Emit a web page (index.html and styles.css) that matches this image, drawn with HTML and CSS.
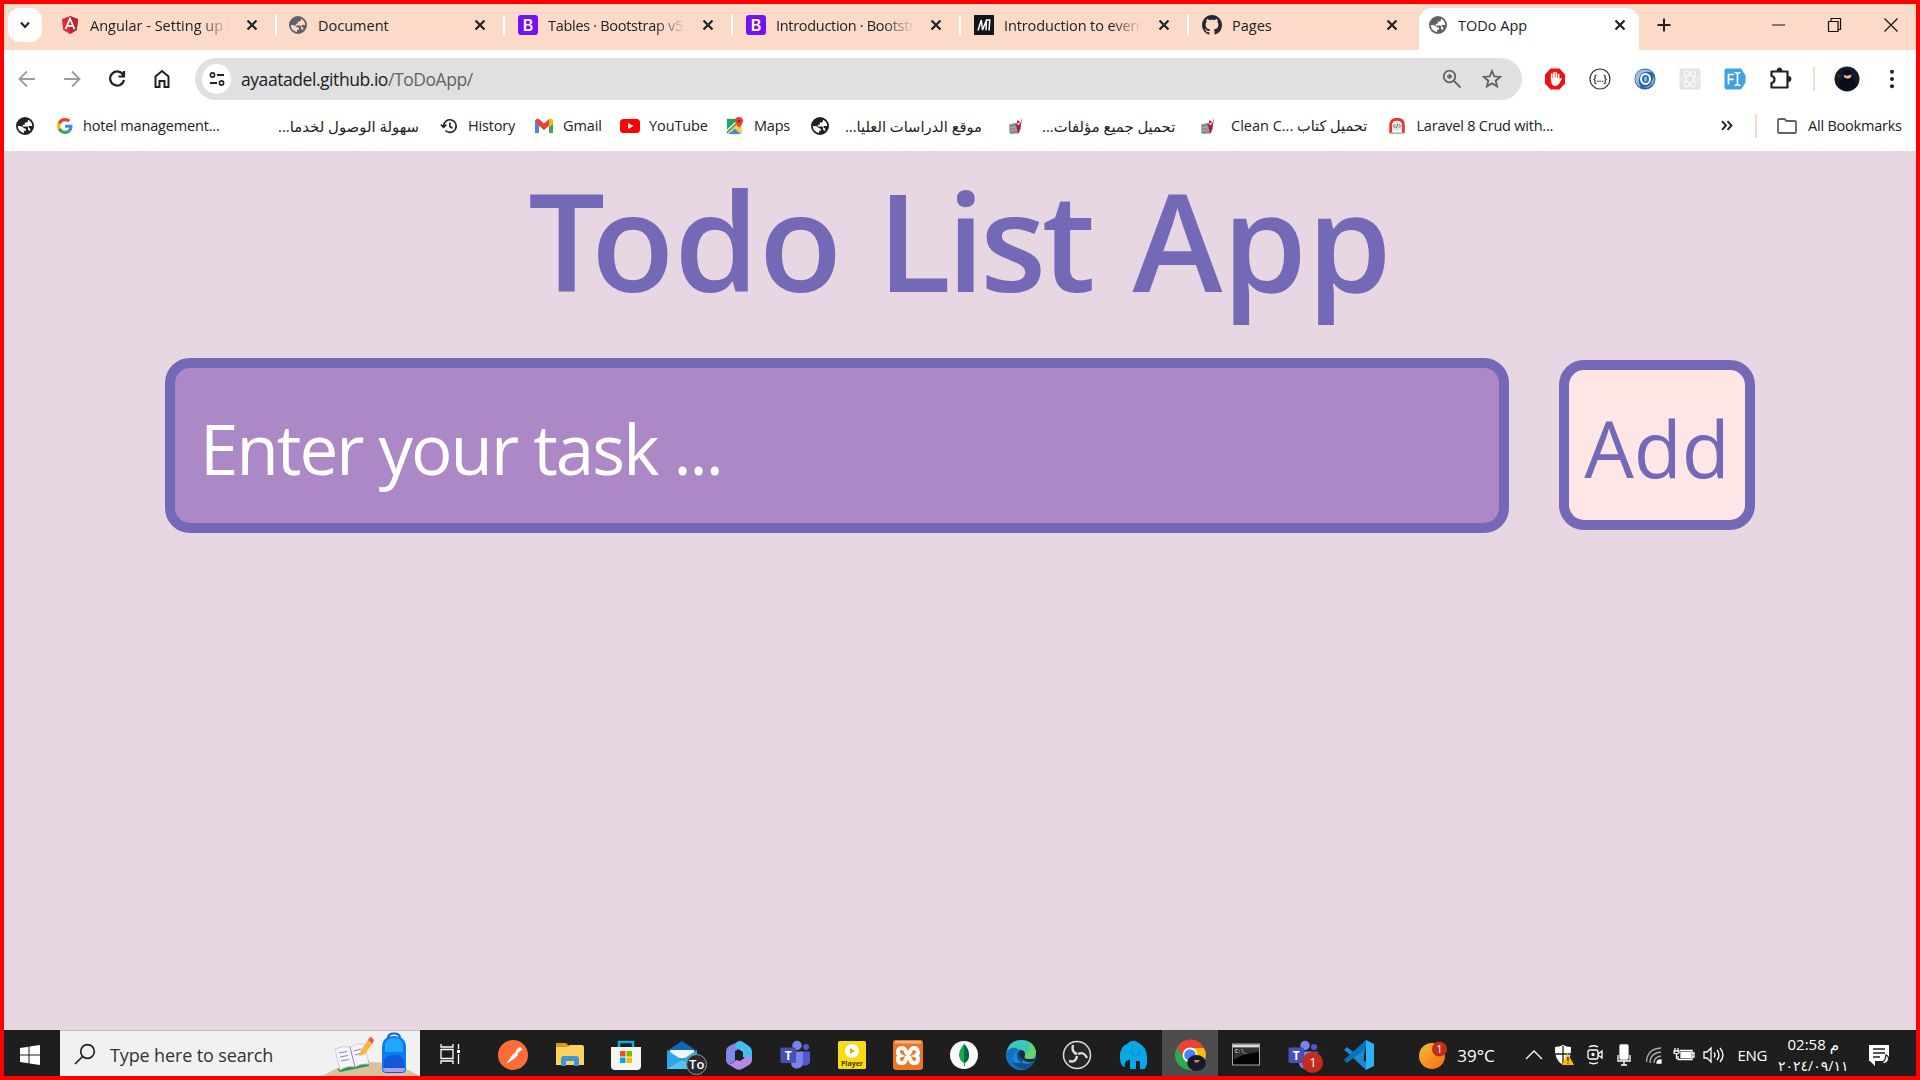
FILE: index.html
```html
<!DOCTYPE html>
<html lang="en">
<head>
<meta charset="utf-8">
<title>TODo App</title>
<link rel="stylesheet" href="styles.css">
</head>
<body>
<svg class="defs" aria-hidden="true">
  <symbol id="close" viewBox="0 0 12 12"><path d="M1.500 1.500l9 9M10.500 1.500l-9 9" stroke="#222" stroke-width="2.200" fill="none"/></symbol>
  <symbol id="globe" viewBox="2 2 20 20"><path fill="currentColor" d="M12 2a10 10 0 1 0 0 20a10 10 0 0 0 0-20zM4 12.200c2-.4 4 0 5.500 1c.8 1.400 2.500 1.800 3.500 2v2h-2v2.700A8 8 0 0 1 4 12.200zM17.600 17.700c-.8-1-2-1-2.200-1.500v-2.700l-1-1H9.500v-2h2.300V8.200h2.400l1-1V5l1.300.500a8 8 0 0 1 3.500 6.500h-3.500l-1 1l2.400 2z"/></symbol>
  <symbol id="book" viewBox="0 0 18 20"><path d="M2 8l8-1.500l2 2V18l-8 1q-2 0-2.500-2V9z" fill="#8d8b8b"/><path d="M2 12l9-1M2 15l9-1" stroke="#b9b7b7" stroke-width=".8"/><path d="M15.500 1c0 3-.5 5-1 7q0 8-4 11c1-3 0-5-1-8l-1.500-3.500l4 2q2.500-3 3.500-8.500z" fill="#a8203c"/><circle cx="11.500" cy="5.500" r="1.500" fill="#a8203c"/></symbol>
  <symbol id="teams" viewBox="0 0 32 32"><circle cx="18" cy="6.500" r="4.700" fill="#7b83eb"/><circle cx="27" cy="8" r="3" fill="#5059c9"/><path d="M22 12.500h9v9q0 5-5 5h-4z" fill="#5059c9"/><path d="M12 12.500h12v10q0 7-6 7t-6-6z" fill="#7b83eb"/><rect x="1.500" y="8.500" width="15.500" height="15.500" rx="1.500" fill="#4650b5"/></symbol>
</svg>
<div class="screen">
  <header class="tabs">
    <button class="tab-search"><svg width="12" height="12" viewBox="0 0 12 12"><path d="M2 3.500l4 4.500l4-4.500" fill="none" stroke="#222" stroke-width="2"/></svg></button>
    <div class="tab"><svg class="fav" viewBox="0 0 20 20"><path d="M10 0l9 3.500l-1.500 12L10 20l-7.500-4.500L1 3.500z" fill="#dd2d35"/><path d="M10 0l9 3.500l-1.500 12L10 20z" fill="#b9242e"/><path d="M5 14.500L10 3l5 11.500M7 11h6" stroke="#fff" stroke-width="1.900" fill="none"/></svg><span class="tab-title fade">Angular - Setting up t</span><svg class="x"><use href="#close"/></svg></div>
    <div class="tab"><svg class="fav gray"><use href="#globe"/></svg><span class="tab-title">Document</span><svg class="x"><use href="#close"/></svg></div>
    <div class="tab"><svg class="fav big" viewBox="0 0 20 20"><rect width="20" height="20" rx="3" fill="#7411f5"/><text x="10" y="16" text-anchor="middle" class="bs-letter">B</text></svg><span class="tab-title fade snug">Tables · Bootstrap v5.0</span><svg class="x"><use href="#close"/></svg></div>
    <div class="tab"><svg class="fav big" viewBox="0 0 20 20"><rect width="20" height="20" rx="3" fill="#7411f5"/><text x="10" y="16" text-anchor="middle" class="bs-letter">B</text></svg><span class="tab-title fade snug">Introduction · Bootstrap</span><svg class="x"><use href="#close"/></svg></div>
    <div class="tab"><svg class="fav big" viewBox="0 0 20 20"><path d="M0 0h20v20H0z" fill="#15141a"/><path d="M4 15.500L7.300 5L8.500 15L12.500 5L12 15.300M15 15.500L15.800 5H12" stroke="#fff" stroke-width="1.500" fill="none"/></svg><span class="tab-title fade snug-s">Introduction to events</span><svg class="x"><use href="#close"/></svg></div>
    <div class="tab"><svg class="fav big" viewBox="0 0 16 16"><path fill="#24292f" d="M8 0C3.580 0 0 3.580 0 8c0 3.540 2.290 6.530 5.470 7.590.4.070.55-.17.55-.38 0-.19-.01-.82-.01-1.490-2.010.37-2.530-.49-2.690-.94-.09-.23-.48-.94-.82-1.130-.28-.15-.68-.52-.01-.53.63-.01 1.080.58 1.230.82.72 1.210 1.870.87 2.330.66.07-.52.28-.87.51-1.070-1.780-.2-3.640-.89-3.640-3.950 0-.87.310-1.590.82-2.150-.08-.2-.36-1.020.08-2.120 0 0 .67-.210 2.200.82.64-.18 1.320-.27 2-.27s1.360.09 2 .27c1.530-1.040 2.200-.82 2.200-.82.44 1.100.16 1.920.08 2.120.51.56.82 1.270.82 2.150 0 3.070-1.870 3.750-3.650 3.950.29.25.54.73.54 1.480 0 1.070-.01 1.930-.01 2.200 0 .21.15.46.55.38A8.010 8.010 0 0 0 16 8c0-4.420-3.580-8-8-8z"/></svg><span class="tab-title">Pages</span><svg class="x"><use href="#close"/></svg></div>
    <div class="tab active"><svg class="fav gray"><use href="#globe"/></svg><span class="tab-title">TODo App</span><svg class="x"><use href="#close"/></svg></div>
    <svg class="plus" viewBox="0 0 14 14"><path d="M7 .5v13M.5 7h13" stroke="#222" stroke-width="2"/></svg>
    <svg class="win" viewBox="0 0 128 16"><path d="M1 8h13M113.500 1.500l13 13M126.500 1.500l-13 13M57.500 4.500h9.500v10h-9.500zM60 4v-2.500h9.500v11H67" fill="none" stroke="#111" stroke-width="1.200"/></svg>
  </header>
  <nav class="toolbar">
    <svg class="tool" viewBox="0 0 24 24"><path d="M20 12H5M12 4.500L4.500 12L12 19.500" class="nav-dim"/></svg>
    <svg class="tool" viewBox="0 0 24 24"><path d="M4 12h15M12 4.500l7.500 7.500l-7.500 7.500" class="nav-dim"/></svg>
    <svg class="tool" viewBox="0 0 24 24"><path d="M18.500 8.500A7 7 0 1 0 19 13M19 4V9.500H13.500" fill="none" stroke="#222" stroke-width="2.200"/></svg>
    <svg class="tool" viewBox="0 0 24 24"><path d="M5.500 20V9.500L12 4l6.500 5.500V20h-4v-6h-5v6z" fill="none" stroke="#222" stroke-width="2"/></svg>
    <div class="omnibox">
      <span class="tune"><svg width="18" height="18" viewBox="0 0 18 18"><path d="M9 5h7M2 13h7" stroke="#222" stroke-width="1.800"/><circle cx="4.500" cy="5" r="2.100"/><circle cx="13.500" cy="13" r="2.100"/></svg></span>
      <span class="url">ayaatadel.github.io<span class="path">/ToDoApp/</span></span>
      <svg class="omni-icon" viewBox="0 0 22 22"><circle cx="8.500" cy="8.500" r="5.800"/><path d="M13 13l6.500 6.500M8.500 6v5M6 8.500h5"/></svg>
      <svg class="omni-icon" viewBox="0 0 22 22"><path d="M11 3l2.300 5.400l5.900.5l-4.500 3.800l1.400 5.700L11 15.400l-5.100 3l1.400-5.700L2.800 8.900l5.900-.5z"/></svg>
    </div>
    <div class="ext">
      <svg viewBox="0 0 24 24"><path d="M7.500 1.500h9L22 7.500v9l-5.500 6h-9L2 16.500v-9z" fill="#ed1111"/><path d="M8.700 13V7M11 12V5.500M13.300 12V5.500M15.600 13V7.500" stroke="#fff" stroke-width="1.700" stroke-linecap="round"/><path d="M7.900 11h8.500v2l1.200-1.800q1.400-.4 1.200.6L16 17q-1.500 2-4 2t-3.500-3z" fill="#fff"/></svg>
      <svg viewBox="0 0 24 24"><circle cx="12" cy="12" r="10" fill="#fff" stroke="#333" stroke-width="1.200"/><text x="12" y="15" text-anchor="middle" class="braces">{...}</text></svg>
      <svg viewBox="0 0 24 24"><circle cx="12" cy="12" r="10.500" fill="#2762ae"/><path d="M2.500 14Q1 4 11 2.500q6 0 8 3Q10 3 7 9q-3 6 1 11q-4-1-5.500-6z" fill="#9cc0e4"/><path d="M21 9q2 8-5 11q-3 1-6 0q8 0 9-6q1-3 2-5z" fill="#7faedb"/><ellipse cx="12.500" cy="12" rx="4.500" ry="5" fill="#2d6cb8" stroke="#fff" stroke-width="2"/><ellipse cx="12.500" cy="12" rx="1.300" ry="2.500" fill="#a9cbea"/></svg>
      <svg viewBox="0 0 24 24"><rect x="1.500" y="1.500" width="21" height="21" rx="1.500" fill="#e4e4e4"/><g fill="none" stroke="#fafafa"><ellipse cx="12" cy="12" rx="9" ry="3.500"/><ellipse cx="12" cy="12" rx="9" ry="3.500" transform="rotate(60 12 12)"/><ellipse cx="12" cy="12" rx="9" ry="3.500" transform="rotate(120 12 12)"/></g></svg>
      <svg viewBox="0 0 24 24"><path d="M3.500 1.500H18l4.500 7v7l-4.500 7H3.500q-2 0-2-2v-17q0-2 2-2z" fill="#42a1e1"/><path d="M5.500 17.500V7.500h5.500M5.500 12.300h5M11.500 5.500q2.500 0 3 1.500q.5-1.500 3-1.500M14.500 7v10M11.500 18.500q2.500 0 3-1.500q.5 1.500 3 1.500" fill="none" stroke="#fff" stroke-width="1.700"/></svg>
      <svg viewBox="0 0 24 24"><path d="M3.500 4.500h16v16h-16v-4.500q3-.5 3-3.500t-3-3.500z" fill="none" stroke="#222" stroke-width="2.200" stroke-linejoin="round"/><path d="M9 3.500a2.500 2.500 0 0 1 5 0zM20.500 9.500a2.500 2.500 0 0 1 0 5z" fill="#222" stroke="#222"/></svg>
    </div>
    <i class="divider"></i>
    <svg class="avatar" viewBox="0 0 26 26"><circle cx="13" cy="13" r="12.500" fill="#131b2b"/><path d="M5 20q1-6 4-8q-1-8 4-8.500q6 1 5 9q4 3 4 8q-8 8-17-.5z" fill="#0a0e19"/><circle cx="4.500" cy="10" r="1.800" fill="#3a2a22"/><path d="M9.500 9l3.500.8l4.500-1.200l-.5 3l-3 1.200l-3.500-1z" fill="#e0b7a2"/></svg>
    <svg class="dots" viewBox="0 0 6 24"><circle cx="3" cy="4" r="2.200"/><circle cx="3" cy="12" r="2.200"/><circle cx="3" cy="20" r="2.200"/></svg>
  </nav>
  <nav class="bookmarks">
    <span><svg class="bi"><use href="#globe"/></svg></span>
    <span><svg class="bi g" viewBox="0 0 48 48"><path fill="#4285f4" d="M46.500 24.500c0-1.600-.2-3.100-.4-4.500H24v9h12.700c-.6 3-2.300 5.400-4.700 7l7.500 6c4.500-4 7-10 7-17.500z"/><path fill="#34a853" d="M24 48c6.500 0 12-2 15.900-5.800l-7.700-6c-2.200 1.500-5 2.300-8.200 2.300-6.300 0-11.600-4.200-13.500-9.900l-8 6.200C6.500 42.600 14.600 48 24 48z"/><path fill="#fbbc05" d="M10.500 28.600a14 14 0 0 1 0-9.200l-8-6.200a24 24 0 0 0 0 21.600z"/><path fill="#ea4335" d="M24 9.500c3.500 0 6.700 1.200 9.200 3.600l6.900-6.900A24 24 0 0 0 2.500 13.200l8 6.200c1.900-5.700 7.200-9.900 13.500-9.900z"/></svg><b class="hotel">hotel management...</b></span>
    <span><b class="access" dir="rtl">سهولة الوصول لخدما...</b></span>
    <span><svg class="bi" viewBox="0 0 20 20"><path d="M4 10a7 7 0 1 1 2 5M1 8.500l3 3l3-3M11 6v4.500l3 2" fill="none" stroke="#222" stroke-width="1.800"/></svg><b class="nudge-2">History</b></span>
    <span><svg class="bi wide" viewBox="0 0 20 16"><path d="M1 2v13h4V6z" fill="#4285f4"/><path d="M19 2v13h-4V6z" fill="#34a853"/><path d="M1 2.500Q3-.5 5.500 1.500L10 5.500l4.500-4Q17-.5 19 2.500L15 8l-5 4l-5-4z" fill="#ea4335"/><path d="M15 1.500Q18-.5 19 3v3l-4 3z" fill="#fbbc04"/></svg><b class="nudge-1">Gmail</b></span>
    <span><svg class="bi wide" viewBox="0 0 20 16"><rect y="1" width="20" height="14" rx="3.500" fill="#f00"/><path d="M8 5l5.500 3L8 11z" fill="#fff"/></svg><b class="nudge-1">YouTube</b></span>
    <span><svg class="bi" viewBox="0 0 20 20"><rect x="1" y="2" width="16" height="17" fill="#20a464"/><path d="M1 18L14 6l3 3v10H1z" fill="#f5cf42"/><path d="M3 19l7-6l6 6z" fill="#4285f4"/><path d="M1 15L13 4" stroke="#fff" stroke-width="1.500"/><path d="M14.500 12Q10 7 10 4.500a4.500 4.500 0 0 1 9 0Q19 7 14.500 12z" fill="#e74335"/><circle cx="14.500" cy="4.500" r="1.500" fill="#8d1c15"/></svg><b class="nudge-2">Maps</b></span>
    <span><svg class="bi"><use href="#globe"/></svg><b class="studies" dir="rtl">موقع الدراسات العليا...</b></span>
    <span><svg class="bi"><use href="#book"/></svg><b class="works" dir="rtl">تحميل جميع مؤلفات...</b></span>
    <span><svg class="bi"><use href="#book"/></svg><b class="clean">Clean C... تحميل كتاب</b></span>
    <span><svg class="bi" viewBox="0 0 20 20"><path d="M3 18V9q0-6.500 7-6.500T17 9v9" fill="none" stroke="#e3342f" stroke-width="3.200"/><path d="M3 17h14v2H3z" fill="#b9b9b9"/><circle cx="10" cy="10" r="5.500" fill="#e6e6e6"/><path d="M8 8l-2 2l2 2M12 8l2 2l-2 2M11 7.500l-2 5" fill="none" stroke="#555"/></svg><b class="laravel">Laravel 8 Crud with...</b></span>
    <span><svg class="more" viewBox="0 0 12 10"><path d="M1 .7L5 5L1 9.300M6.500 .7l4 4.300l-4 4.300" fill="none" stroke="#222" stroke-width="1.900"/></svg></span>
    <i class="divider"></i>
    <span><svg class="folder" viewBox="0 0 20 16"><path d="M1 2q0-1 1-1h5.500l2 2H18q1 0 1 1v10q0 1-1 1H2q-1 0-1-1z" fill="none" stroke="#5f6368" stroke-width="1.800"/></svg><b class="all">All Bookmarks</b></span>
  </nav>
  <main class="app">
    <h1><span class="kern">T</span>odo <span class="list">List</span> App</h1>
    <div class="entry">
      <div class="task"><span>Enter your task ...</span></div>
      <button class="add"><span>Add</span></button>
    </div>
  </main>
  <footer class="taskbar">
    <div class="start"><svg width="20" height="20" viewBox="0 0 20 20"><path d="M0 3l8.500-1.300v7.800H0zM9.500 1.500L20 0v9.500H9.500zM0 10.500h8.500v7.800L0 17zM9.500 10.500H20V20L9.500 18.500z" fill="#fff"/></svg></div>
    <div class="search">
      <svg class="lens" width="22" height="22" viewBox="0 0 22 22"><circle cx="13.500" cy="8.500" r="6.800"/><path d="M8.500 13.500L1 21"/></svg>
      <span class="search-text">Type here to search</span>
      <svg class="art" viewBox="0 0 97 45"><path d="M0 45Q22 30 49 31t48 14z" fill="#dcc09b"/><path d="M14 38l3 3l29-6v-6z" fill="#27994c"/><path d="M12 18q8-4 15-2q6-4 14-3l5 20q-8-1-14 3q-7-2-15 3z" fill="#f5f4fa" stroke="#c7c3dc" stroke-width=".8"/><path d="M27 16l5 20M16 22l8-1.500M17 26l8-1.500M18 30l8-1.500M31 20l7-2M32 24l7-2" stroke="#8b86b0" stroke-width="1" fill="none"/><path d="M36 25l2-6L45 9l4 4l-7 10z" fill="#fbb53a"/><path d="M45 9l2-3q3 0 4 4l-2 3z" fill="#e85b4e"/><path d="M65 7q0-4.500 6-4.500t6 4.500" fill="none" stroke="#1360c8" stroke-width="2"/><path d="M59 38V17Q59 5 71 5t12 12v21q0 4-4 4H63q-4 0-4-4z" fill="#087dee"/><path d="M62 15Q62 7 71 7t9 8v6H62z" fill="#22a5ff"/><path d="M61 39V31q0-7 10-7t10 7v8q-1 3-5 3H66q-5 0-5-3z" fill="#1159d8"/><path d="M60 37h22q0 4-3 4H63q-3 0-3-4z" fill="#a7a2f5"/></svg>
    </div>
    <div class="view"><svg width="22" height="22" viewBox="0 0 22 22"><path d="M2 1v3h12V1M2 6.500h12v9H2zM2 21v-3h12v3M19.500 1v5M19.500 11v10" fill="none" stroke="#fff" stroke-width="1.300"/><path d="M18 7h3v3h-3z" fill="#fff"/></svg></div>
    <div class="apps">
      <div><svg viewBox="0 0 32 32"><circle cx="16" cy="16" r="15" fill="#ff6c37"/><path d="M9 25l7-10l4-1l1 2l-4 4z" fill="#fff"/><path d="M18 14l2-4q3-3 4.500-1T23 12l-3 3z" fill="#fff"/></svg></div>
      <div><svg viewBox="0 0 32 32"><path d="M2 4h10l3 3v5H2z" fill="#d99b10"/><path d="M2 8h11l3-2h12q2 0 2 2v18H2z" fill="#ffd35b"/><path d="M7 27V20q0-3 3-3h12q3 0 3 3v7h-5v-5h-8v5z" fill="#3e94d9"/></svg></div>
      <div><svg viewBox="0 0 32 32"><path d="M9 8V3h14v5" fill="none" stroke="#18a8df" stroke-width="2.500"/><path d="M1 8h30v19q0 4-4 4H5q-4 0-4-4z" fill="#f5f5f5"/><path d="M10 12h5.500v5.500H10z" fill="#f25022"/><path d="M16.500 12H22v5.500h-5.500z" fill="#7fba00"/><path d="M10 18.500h5.500V24H10z" fill="#00a4ef"/><path d="M16.500 18.500H22V24h-5.500z" fill="#ffb900"/></svg></div>
      <div><svg viewBox="0 0 32 32"><path d="M1 12L16 2l15 10v18H1z" fill="#1168b8"/><path d="M4 11h24v8H4z" fill="#f4f4f4"/><path d="M1 11l15 10l15-10v19H1z" fill="#28a8ea"/><path d="M4 11h24L16 20z" fill="#f4f4f4"/><path d="M1 30l15-9l15 9z" fill="#50c5f5"/></svg><em class="badge dark">To</em></div>
      <div><svg viewBox="0 0 32 32"><path d="M17 2L6 7q-3 2-3 5v9q0 3 3 4.500l6-3.500V12l8-4z" fill="#7f86e8"/><path d="M14 3q3-2 6 0l6 4q3 2 3 5v10l-9-4v-5l-8-5z" fill="#41bdf0"/><path d="M29 18v3q0 3-3 5l-7 4q-3 1.500-6 0l-8-5q5 0 8-4l4 1l6-4z" fill="#b58ae8"/><path d="M16 11l4 2.500v5L16 21l-4-2.500v-5z" fill="#1e1e1e"/></svg></div>
      <div><svg viewBox="0 0 32 32"><use href="#teams"/><text x="9.300" y="20.500" text-anchor="middle" class="teams-letter">T</text></svg></div>
      <div><svg viewBox="0 0 32 32"><rect x="2" y="2" width="28" height="28" rx="1.500" fill="#f8da16"/><circle cx="16" cy="12" r="7" fill="#fff"/><path d="M14 9l5 3l-5 3z" fill="#dfad00"/><text x="16" y="27" text-anchor="middle" class="player-label">Player</text></svg></div>
      <div><svg viewBox="0 0 32 32"><rect x="1" y="1" width="30" height="30" rx="3" fill="#ee7426"/><path d="M3 2h26v2.500H3z" fill="#f9b483"/><path d="M10 9q3 0 4 4q1 2 2 2t2-2q1-4 4-4t4 4q0 2.500-2 3.500q2 .5 2 4q0 3.500-4 3.500q-3 0-4-4q-1-2-2-2t-2 2q-1 4-4 4q-4 0-4-3.500t2-4q-2-1-2-3.500q0-4 4-4z" fill="none" stroke="#fff" stroke-width="4"/></svg></div>
      <div><svg viewBox="0 0 32 32"><circle cx="16" cy="16" r="14" fill="#fafafa"/><path d="M16 5q5 5 5 11t-4 8v3h-1v-3q-5-3-5-8t5-11z" fill="#13aa52"/><path d="M16 5q5 5 5 11t-5 8z" fill="#00684a"/></svg></div>
      <div><svg viewBox="0 0 32 32"><circle cx="16" cy="16" r="15" fill="#1589d3"/><path d="M2 12Q5 1 16 1q13 0 15 12q0 7-8 7q-5 0-3-4q-1-6-8-6q-6 0-10 4z" fill="#3cc6b8"/><path d="M24 3.500q7 4 7 10.500t-8 6q-5 0-3-4q6-3 4-12.500z" fill="#68d463"/><path d="M12 12q-6 5-3 12q4 6 13 6q-8 3-15-2Q0 22 1 14q3-6 11-5z" fill="#1172c4"/><path d="M20 16q0-5-5-5q-4 2-3 7q2 7 10 7q4 0 7-3q-2 6-9 8q-9 0-13-7q12 3 11-3z" fill="#124f93"/><path d="M16 11q4 1 4 5q-2 4 3 4h8l-1 2q-8 3-13-2t-1-9z" fill="#1e2a38"/></svg></div>
      <div><svg viewBox="0 0 32 32"><circle cx="16" cy="16" r="13.500" fill="#282528" stroke="#ddd" stroke-width="1.500"/><path d="M16 15Q10 13 12 6M17 15q6-3 9 4M16 17q-1 7-8 5" fill="none" stroke="#ddd" stroke-width="2.400"/></svg></div>
      <div><svg viewBox="0 0 32 32"><path d="M3 20Q2 8 10 5q5-6 12-1q8 4 8 15v6l-2 5h-5v-8h-4v8h-6v-9q-4 0-5 3q-1 4 1 4q-5 1-6-8z" fill="#08a8e8"/><path d="M16 6q-4 6 1 11q5 1 6-6" stroke="#0784ba" fill="none"/></svg></div>
      <div class="running"><svg viewBox="0 0 32 32"><circle cx="16" cy="16" r="15" fill="#2da94f"/><path d="M3 9A15 15 0 0 1 30 9H16L10 19z" fill="#ea4335"/><path d="M30 9a15 15 0 0 1-14 22l7-12L18 9z" fill="#fbbc04"/><circle cx="16" cy="16" r="7.500" fill="#fff"/><circle cx="16" cy="16" r="5.800" fill="#4285f4"/><ellipse cx="22.500" cy="24" rx="9.300" ry="8" fill="#171a28"/><path d="M20 21h6l-2 2.500h-3z" fill="#bd8f79"/></svg></div>
      <div><svg viewBox="0 0 32 32"><rect x="2.500" y="5" width="27" height="21" fill="#050505" stroke="#aaa"/><path d="M3 5.500h26v3H3z" fill="#ddd"/><path d="M4 21Q13 14 29 13V9H4z" fill="#333"/><text x="5" y="13.500" class="prompt">C:\_</text></svg></div>
      <div><svg viewBox="0 0 32 32"><use href="#teams"/><text x="9.300" y="20.500" text-anchor="middle" class="teams-letter">T</text></svg><em class="badge red">1</em></div>
      <div><svg viewBox="0 0 32 32"><path d="M23 1L7 16L23 31V23L4 8L1 11l19 15z" fill="#198bd0"/><path d="M1 21l3 3L23 9V1z" fill="#0873bd"/><path d="M23 1l8 4v22l-8 4z" fill="#2bb1f5"/></svg></div>
    </div>
    <div class="tray">
      <span><svg width="36" height="34" viewBox="0 0 36 34"><defs><linearGradient id="sun" x2="1" y2="1"><stop stop-color="#f2bd3a"/><stop offset="1" stop-color="#f96a11"/></linearGradient></defs><circle cx="18" cy="18" r="13" fill="url(#sun)"/><circle cx="25.500" cy="11" r="7.500" fill="#c42b1c"/><text x="25.500" y="15" text-anchor="middle" class="alert">1</text></svg></span>
      <span class="temp">39°C</span>
      <span><svg width="18" height="12" viewBox="0 0 18 12"><path d="M1 10l8-8l8 8"/></svg></span>
      <span><svg width="20" height="22" viewBox="0 0 20 22"><path d="M9 1q4 2 8 2q1 13-8 18Q0 16 1 3q4 0 8-2z" fill="#fff" stroke="none"/><path d="M9 2v19M1 10h16" stroke="#222"/><path d="M13.500 9L20 21H8z" fill="#ffb900" stroke="none"/><path d="M14 13v4M14 18.500v1" stroke="#222"/></svg></span>
      <span><svg width="18" height="22" viewBox="0 0 18 22"><rect x="2" y="6" width="10" height="9" rx="2"/><path d="M12 10l4-3v7l-4-3M3 3q4.500-2.500 9 0M3 18.500q4.500 2.500 9 0"/><circle cx="7" cy="10.500" r="1"/></svg></span>
      <span><svg width="14" height="22" viewBox="0 0 14 22"><rect x="3" y="1" width="8" height="14" rx="1" fill="#fff"/><path d="M1 11v6h12v-6M7 17v4M4 21h6"/></svg></span>
      <span><svg width="18" height="18" viewBox="0 0 18 18"><path d="M1.500 16Q2 3 16 2M5 17Q5 7 16 6M9 17q0-6 7-7" stroke="#aaa"/><path d="M12 17q0-3 4-3v3z" fill="#fff"/></svg></span>
      <span><svg width="22" height="18" viewBox="0 0 22 18"><path d="M7 4.500h12v9H5V10M19 7h2v4h-2"/><path d="M8 6.500h9.500v5H8z" fill="#fff"/><path d="M2 2v3M5 2v3M1 5h5v2q-2.500 2-5 0zM3.500 8v5"/></svg></span>
      <span><svg width="22" height="18" viewBox="0 0 22 18"><path d="M1 6h3l4-4v14l-4-4H1zM11 6.500q2 2.500 0 5M14 4q4 5 0 10M17 2q6 7 0 14"/></svg></span>
      <span class="lang">ENG</span>
      <span class="clock"><time class="hour">02:58 م</time><time class="date">٢٠٢٤/٠٩/١١</time></span>
      <span><svg width="22" height="22" viewBox="0 0 22 22"><path d="M1 1h20v16H7v5l-5-5H1z" fill="#fff" stroke="none"/><path d="M5 5h12M5 9h12M5 13h7" stroke="#222" stroke-width="1.400"/><path d="M18 11q3 1 2.500 5q-2 5-8 3q5-1 5.500-8z" fill="#fff" stroke="#222"/></svg></span>
    </div>
  </footer>
</div>
</body>
</html>
```
FILE: styles.css
```css
* { box-sizing: border-box; }
body { margin: 0; overflow: hidden; font-family: "Open Sans", "Noto Sans", "DejaVu Sans", sans-serif; color: #202124; }
button { font: inherit; margin: 0; padding: 0; }
svg { display: block; flex: none; }
.defs { position: absolute; width: 0; height: 0; }
.screen { width: 1920px; height: 1080px; border: 4px solid #f00; display: flex; flex-direction: column; background: #fff; }

/* tab strip */
.tabs { height: 46px; background: #fcdac8; display: flex; align-items: center; padding-bottom: 4px; }
.tab-search { width: 34px; height: 34px; margin: 0 6px 0 4px; border: 0; border-radius: 12px; background: #fff; display: grid; place-items: center; }
.tab { position: relative; width: 228px; height: 42px; display: flex; align-items: center; padding: 0 18px 0 13px; font-size: 14.5px; white-space: nowrap; }
.tab + .tab::before { content: ""; position: absolute; left: -1px; top: 11px; width: 2px; height: 21px; border-radius: 1px; background: #fff; }
.tab.active::before { display: none; }
.active { z-index: 0; }
.active::after { content: ""; position: absolute; z-index: -1; left: 3px; right: 5px; top: 4px; bottom: -4px; background: #fff; border-radius: 13px 13px 0 0; }
.fav { width: 18px; height: 18px; margin-right: 11px; }
.fav.big { width: 20px; height: 20px; margin: 0 10px 0 1px; }
.bs-letter { font: 600 16px Inter, sans-serif; fill: #fff; }
.gray { color: #5f6368; }
.tab-title { flex: 1; overflow: hidden; margin-right: 16px; }
.fade { -webkit-mask-image: linear-gradient(90deg, #000 78%, transparent); mask-image: linear-gradient(90deg, #000 78%, transparent); }
.snug { letter-spacing: -.3px; }
.snug-s { letter-spacing: -.12px; }
.x { width: 12px; height: 12px; }
.plus { width: 14px; height: 14px; margin-left: 13px; }
.win { width: 128px; height: 16px; margin: 0 17px 0 auto; }

/* toolbar */
.toolbar { height: 58px; display: flex; align-items: center; padding-left: 11px; }
.tool { width: 24px; height: 24px; margin-right: 21px; }
.nav-dim { fill: none; stroke: #9d9d9d; stroke-width: 1.9; }
.omnibox { width: 1327px; height: 42px; border-radius: 21px; background: #e0e0e0; display: flex; align-items: center; padding: 0 19px 0 7px; }
.tune { width: 29px; height: 30px; border-radius: 50%; background: #fff; display: grid; place-items: center; margin-right: 10px; }
.tune circle { fill: none; stroke: #222; stroke-width: 1.6; }
.url { font-size: 17.5px; letter-spacing: -.44px; flex: 1; white-space: nowrap; }
.path { color: #636363; }
.omni-icon { width: 22px; height: 22px; margin-left: 18px; fill: none; stroke: #5f6368; stroke-width: 1.8; }
.ext { display: flex; gap: 21px; margin-left: 21px; }
.ext svg { width: 24px; height: 24px; }
.braces { font: bold 8.5px "Liberation Sans", sans-serif; fill: #222; }
.divider { width: 2px; height: 24px; background: #fcdac8; flex: none; justify-self: center; }
.toolbar .divider { margin-left: 21px; }
.avatar { width: 26px; height: 26px; margin-left: 19px; }
.dots { width: 6px; height: 22px; margin-left: 29px; fill: #222; }

/* bookmarks bar */
.bookmarks { height: 43px; padding: 0 0 8px 12px; display: grid; grid-template-columns: 41px 221px 162px 94px 86px 106px 85px 196px 192px 189px 333px 27px 15px 1fr; align-items: center; font-size: 14.5px; }
.bookmarks span { display: flex; align-items: center; white-space: nowrap; }
.bookmarks b { font-weight: 400; }
.bi { width: 18px; height: 18px; margin-right: 8px; }
.bi.g { width: 16px; height: 16px; margin-right: 10px; }
.bi.wide { width: 20px; height: 16px; }
.hotel { letter-spacing: -.17px; }
.access { font-size: 14.9px; }
.nudge-1 { margin-left: 1px; letter-spacing: -.1px; }
.nudge-2 { margin-left: 2px; letter-spacing: -.2px; }
.studies { margin-left: 8px; font-size: 14.7px; }
.works { margin-left: 9px; font-size: 14.8px; }
.clean { margin-left: 6px; }
.laravel { margin-left: 2.5px; letter-spacing: -.22px; }
.all { letter-spacing: -.22px; }
.more { width: 12px; height: 11px; }
.folder { width: 20px; height: 16px; margin: 0 11px 0 14px; }

/* todo page */
.app { flex: 1; background: #e8d7e3; }
h1 { margin: 0; height: 205px; text-align: center; color: #7469b6; font-size: 136px; font-weight: 600; line-height: 178px; white-space: nowrap; }
.kern { margin-right: -14px; }
.list { letter-spacing: -4.5px; margin-right: 6px; }
.entry { display: flex; align-items: flex-start; padding: 2px 0 0 161px; gap: 50px; }
.task { width: 1344px; height: 175px; border: 10px solid #7469b6; border-radius: 25px; background: #ad88c6; color: #fff; font-size: 69px; letter-spacing: -1.95px; padding: 4px 0 0 25px; display: flex; align-items: center; white-space: nowrap; }
.add { width: 196px; height: 170px; margin-top: 2px; padding-top: 5px; border: 10px solid #7469b6; border-radius: 25px; background: #ffe6e6; color: #7469b6; font-size: 78.5px; }

/* taskbar */
.taskbar { height: 46px; background: #1e1e1e; display: flex; align-items: center; color: #fff; }
.start { width: 56px; display: grid; place-items: center; padding: 4px 4px 0 0; }
.search { width: 360px; height: 46px; background: #f1f1f1; border-top: 1px solid #bbb; display: flex; align-items: center; padding-left: 14px; }
.lens { fill: none; stroke: #222; stroke-width: 1.7; }
.search-text { flex: 1; margin-left: 14px; padding-top: 2px; font-size: 18px; letter-spacing: -.13px; color: #333; white-space: nowrap; }
.art { width: 97px; height: 45px; }
.view { width: 65px; display: grid; place-items: center; padding: 2px 5px 0 0; }
.apps { display: flex; }
.apps div { width: 56.4px; height: 46px; display: grid; place-items: center; position: relative; padding-top: 4px; }
.apps svg { width: 32px; height: 32px; }
.teams-letter { font: 700 12px "Open Sans", sans-serif; fill: #fff; }
.player-label { font: 700 7px "Open Sans", sans-serif; fill: #4c3a00; }
.prompt { font: 5px "Liberation Mono", monospace; fill: #fff; }
.apps .running { background: #4d4d4d; }
.badge { position: absolute; left: 32px; top: 24px; width: 21px; height: 21px; border-radius: 50%; display: grid; place-items: center; font-style: normal; font-size: 13px; line-height: 1; }
.dark { background: #292929; border: 1px solid #999; font-weight: 600; }
.red { background: #c42b1c; left: 28px; top: 22px; }
.tray { margin-left: 27px; display: grid; grid-template-columns: 36px 68px 32px 28px 33px 26px 34px 26px 34px 42px 80px 52px; align-items: center; justify-items: center; height: 46px; padding-top: 3px; white-space: nowrap; }
.tray svg { fill: none; stroke: #fff; stroke-width: 1.3; }
.tray circle[fill] { stroke: none; }
.tray .alert { font: 11px "Open Sans", sans-serif; stroke: none; fill: #fff; }
.temp { font-size: 17px; justify-self: start; margin-left: 7px; }
.lang { font-size: 15px; letter-spacing: -.4px; }
.clock { display: grid; justify-items: center; font-size: 15px; line-height: 22px; }
.hour { letter-spacing: -.5px; }
.date { font-size: 14px; letter-spacing: -1px; }
```
